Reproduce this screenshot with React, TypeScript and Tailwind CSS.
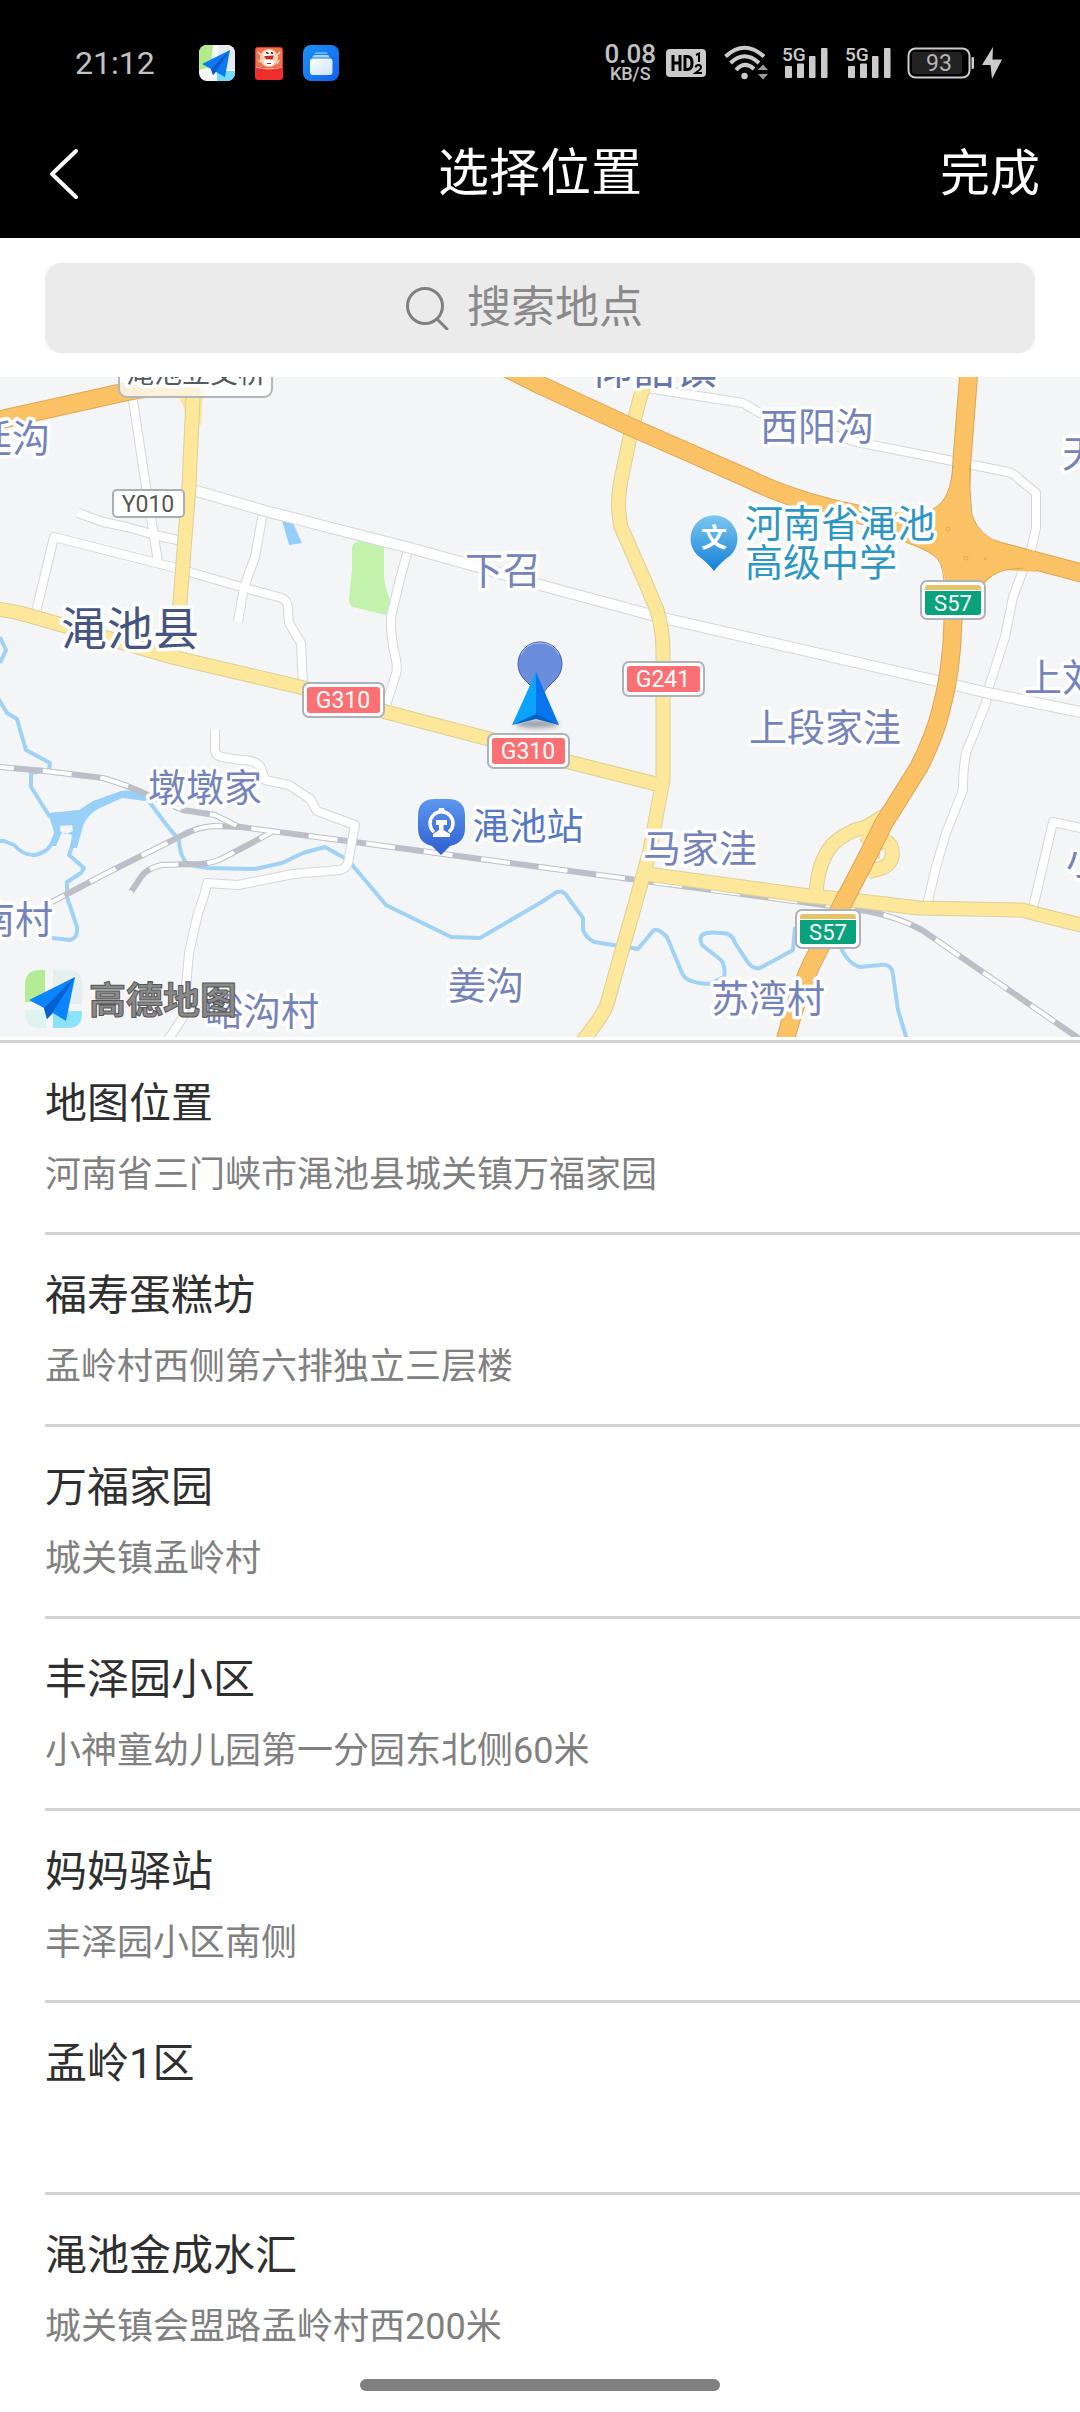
import React from "react";

const SANS = "font-['Roboto','Noto_Sans_CJK_SC',sans-serif]";

type Place = { name: string; address: string };

const places: Place[] = [
  { name: "地图位置", address: "河南省三门峡市渑池县城关镇万福家园" },
  { name: "福寿蛋糕坊", address: "孟岭村西侧第六排独立三层楼" },
  { name: "万福家园", address: "城关镇孟岭村" },
  { name: "丰泽园小区", address: "小神童幼儿园第一分园东北侧60米" },
  { name: "妈妈驿站", address: "丰泽园小区南侧" },
  { name: "孟岭1区", address: "" },
  { name: "渑池金成水汇", address: "城关镇会盟路孟岭村西200米" },
];

function MapAppIcon() {
  return (
    <svg viewBox="0 0 36 36" className="size-9">
      <defs>
        <clipPath id="app-tile">
          <rect width="36" height="36" rx="8" />
        </clipPath>
      </defs>
      <g clipPath="url(#app-tile)">
        <rect width="36" height="36" fill="#f4f6f8" />
        <path d="M0 0H14L12 22L0 25Z" fill="#b3ea8c" />
        <path d="M20 0H36V24H18Z" fill="#e6ebef" />
        <path d="M18 26H36V36H18Z" fill="#74dcfa" />
      </g>
      <path d="M31 5L3 19L12 24L14 30L17 27L26 32Z" fill="#0a7bf2" />
      <path d="M31 5L12 24L14 30L17 26Z" fill="#0b57c6" />
    </svg>
  );
}

function RedAppIcon() {
  return (
    <svg viewBox="0 0 28 33" className="h-[33px] w-7">
      <rect width="28" height="33" rx="3" fill="#ee2d2d" />
      <path d="M1 3Q1 1 3 1H25Q27 1 27 3V19Q14 23 1 19Z" fill="#f0764f" />
      <path d="M1 20Q14 24 27 20" stroke="#ffc9a8" strokeWidth="1" fill="none" />
      <circle cx="14" cy="11" r="9" fill="#fbd3b5" />
      <path d="M9 7Q10 3 14 3.500Q18 2.500 19 7L20 10H8Z" fill="#fff" />
      <path d="M9 13H19Q20 19 14 19Q8 19 9 13Z" fill="#fff" />
      <path d="M11 5.500L13.500 6.500M16 5.500L18 6.500" stroke="#3a2020" strokeWidth="1.500" />
      <path d="M9 9L19 8.500L17.500 12.500L11 12Z" fill="#c42a25" />
      <path d="M3 5L6 8M3 13L6 15M25 5L22 8M24 13L22 17" stroke="#ffe6b0" strokeWidth="1.500" />
      <path d="M12 16.500H16" stroke="#8a3030" strokeWidth="1" />
    </svg>
  );
}

function BlueAppIcon() {
  return (
    <svg viewBox="0 0 36 36" className="size-9">
      <defs>
        <linearGradient id="blue-app" x1="0" y1="0" x2="1" y2="1">
          <stop offset="0" stopColor="#1b93f5" />
          <stop offset="1" stopColor="#1460ec" />
        </linearGradient>
        <linearGradient id="blue-card" x1="0" y1="0" x2="1" y2="1">
          <stop offset="0" stopColor="#ffffff" />
          <stop offset="1" stopColor="#c9e2ff" />
        </linearGradient>
      </defs>
      <rect width="36" height="36" rx="8" fill="url(#blue-app)" />
      <path d="M13 7H23L25 9H11Z" fill="#5db4fb" />
      <path d="M11 10H25L27 12.500H9Z" fill="#a3d3fd" />
      <rect x="7" y="13.500" width="22.500" height="16.500" rx="3" fill="url(#blue-card)" />
    </svg>
  );
}

function HdIcon() {
  return (
    <svg viewBox="0 0 40 28" className="h-7 w-10" role="img" aria-label="HD">
      <rect width="40" height="28" rx="4" fill="#cbcbcb" />
      <path d="M7 6V22M14 6V22M7 14H14" stroke="#000" strokeWidth="3" fill="none" />
      <path d="M19 7.500H21Q26 7.500 26 14T21 20.500H19Z" stroke="#000" strokeWidth="3" fill="none" />
      <path d="M30 6L33 4.500V13" stroke="#000" strokeWidth="2" fill="none" />
      <path d="M29.500 18.500Q30 16 32.500 16T35 18.500Q35 20 29.500 24H36" stroke="#000" strokeWidth="2" fill="none" />
    </svg>
  );
}

function WifiIcon() {
  return (
    <svg viewBox="0 0 44 36" className="h-9 w-11">
      <g fill="none" stroke="#cbcbcb" strokeWidth="4">
        <path d="M1.500 11.500Q20.500 -6 40 11.500" />
        <path d="M6.500 18Q20.500 4.500 35 18" />
        <path d="M12 25Q20.500 15.500 30 24" />
      </g>
      <circle cx="20.500" cy="31" r="3.200" fill="#cbcbcb" />
      <path d="M34 25L39 19.500L44 25ZM34 29L39 34.500L44 29Z" fill="#9a9a9a" />
    </svg>
  );
}

function SignalIcon() {
  return (
    <svg viewBox="0 0 46 34" className="h-[34px] w-[46px]">
      <text x="0" y="15" fill="#cbcbcb" fontSize="19" fontWeight="500" fontFamily="Roboto, sans-serif">
        5G
      </text>
      <g fill="#cbcbcb">
        <rect x="3" y="20" width="7" height="12" rx="1" />
        <rect x="15" y="17.500" width="7" height="14.500" rx="1" />
        <rect x="27" y="10" width="6.500" height="22" rx="1" />
        <rect x="39" y="2" width="6.500" height="30" rx="1" />
      </g>
    </svg>
  );
}

function BatteryIcon() {
  return (
    <svg viewBox="0 0 96 32" className="h-8 w-24" role="img" aria-label="93%">
      <rect x="1.500" y="1.500" width="61" height="29" rx="7" fill="none" stroke="#cbcbcb" strokeWidth="2" />
      <rect x="5" y="5" width="50" height="22" rx="3" fill="#222" />
      <rect x="64.500" y="10" width="2.500" height="12" rx="1" fill="#cbcbcb" />
      <text x="32" y="24" textAnchor="middle" fill="#b5b5b5" fontSize="23" fontFamily="Roboto, sans-serif">
        93
      </text>
      <path d="M86 0L75 18H83.500L85 32L95 12.500H85.500Z" fill="#cbcbcb" />
    </svg>
  );
}

function StatusBar() {
  return (
    <div className="flex h-[106px] items-center justify-between pt-5 pr-[77px] pl-[75px] text-[#c2c2c2]">
      <div className="flex items-center">
        <span className="w-[124px] text-[32px] leading-10">21:12</span>
        <div className="flex items-center gap-5">
          <MapAppIcon />
          <RedAppIcon />
          <BlueAppIcon />
        </div>
      </div>
      <div className="flex items-center">
        <div className="mr-2.5 flex flex-col items-center font-medium">
          <span className="text-[26px] leading-[22px]">0.08</span>
          <span className="text-[18px] leading-[18px]">KB/S</span>
        </div>
        <div className="mr-[18px]">
          <HdIcon />
        </div>
        <div className="mr-3.5">
          <WifiIcon />
        </div>
        <div className="mr-4 flex gap-[17px]">
          <SignalIcon />
          <SignalIcon />
        </div>
        <BatteryIcon />
      </div>
    </div>
  );
}

const yellowRoads = [
  "M193 397L189 487L185 537L180 603L172 657",
  "M-5 609Q10 610 27 615L62 625L172 657L300 687L386 712L489 739L569 762L660 785",
  "M649 370L640 398L630 437L621 480Q616 505 621 527L643 577L657 610Q663 630 663 653V780L650 850L640 887L623 947L609 997Q607 1008 597 1022L582 1042",
  "M647 874L809 896L860 901L919 908L1022 910Q1040 915 1085 926",
  "M816 900Q816 865 832 845Q846 831 866 827L886 815",
  "M864 834Q874 842 872 858",
  "M876 846Q884 836 891 846Q896 862 882 868L868 872",
];

const whiteRoads = [
  "M133 400L146 487L153 530L158 562",
  "M78 513L103 522L127 527L155 535L182 541",
  "M36 612L54 537L176 568L241 587L282 598Q288 600 288 610L289 623L301 643L303 686",
  "M263 513L255 557L244 587L238 622",
  "M408 550L399 583L391 617Q390 635 396 660Q398 670 395 677L386 705",
  "M647 388L743 403L760 413L857 442L953 461L1008 472Q1015 474 1020 480L1036 493V528L1031 550L1022 573L1013 597L1005 637L988 690L986 703L970 743Q963 755 963 790L946 833L936 867L927 905",
  "M1032 912L1053 822L1085 829",
  "M215 730V751Q216 756 222 757L241 760Q257 760 261 768L265 780L289 785L310 799L317 811L355 825L348 863Q346 869 339 870L293 874L238 885L207 883Q206 892 198 913L189 953L186 987L183 1017L168 1040",
];

const mainWhite = "M193 490L269 512L410 548L482 568L540 585L659 617L946 683L988 693L1085 713";

const orangeRoads = [
  "M-10 422L125 392Q160 384 200 388",
  "M496 363L540 385L633 428L747 478Q780 495 830 508L920 528",
  "M969 370L962 460L960 497L963 583L953 620Q952 670 941 710Q935 735 919 767L884 823L864 863L843 903L812 963Q797 995 784 1045",
  "M985 548L1036 561L1085 574",
];

const rivers = [
  "M-2 698L7 713L17 719L21 733L26 750L50 763L49 770L31 773V787L50 817",
  "M0 637L6 650L0 663",
  "M-2 841H4L14 845Q24 856 35 855Q50 852 54 838",
  "M75 838L69 855L84 868L81 873L67 882V897L77 927Q78 938 70 940L52 938",
  "M145 796L165 823L179 840Q180 860 190 865L207 868L255 869L282 863L303 853L325 847L348 860L386 905L451 937L480 938L540 903L557 892Q563 890 566 895L583 918V930Q588 942 600 943L638 949L653 931Q657 927 667 937L682 973Q686 983 709 984L724 977Q726 967 721 960L702 945Q695 930 720 933Q732 932 735 943L747 961Q753 970 760 968L793 950L795 927",
  "M840 946Q848 964 860 967L880 965Q892 963 893 975L898 1010L907 1040",
];

const rails = [
  "M0 767L45 771L103 778Q127 785 148 795L183 810L215 815L239 827",
  "M52 902L103 875L183 835Q198 827 213 826L241 827L362 843L540 867L809 903L867 911Q898 917 922 930L1084 1042",
  "M272 832L246 846L219 860Q205 865 189 864L162 865Q147 868 141 877L131 892",
];

const villages = [
  { text: "廷沟", x: 50, y: 439, anchor: "end" },
  { text: "下召", x: 503, y: 571, anchor: "middle" },
  { text: "西阳沟", x: 817, y: 427, anchor: "middle" },
  { text: "天", x: 1062, y: 454, anchor: "start" },
  { text: "上刘", x: 1024, y: 678, anchor: "start" },
  { text: "上段家洼", x: 825, y: 728, anchor: "middle" },
  { text: "墩墩家", x: 205, y: 788, anchor: "middle" },
  { text: "马家洼", x: 700, y: 849, anchor: "middle" },
  { text: "小", x: 1066, y: 861, anchor: "start" },
  { text: "南村", x: 53, y: 920, anchor: "end" },
  { text: "姜沟", x: 486, y: 986, anchor: "middle" },
  { text: "苏湾村", x: 768, y: 999, anchor: "middle" },
  { text: "峪沟村", x: 262, y: 1012, anchor: "middle" },
] as const;

function RoadPair({ paths, edge, fill, width }: { paths: string[]; edge: string; fill: string; width: number }) {
  return (
    <g fill="none" strokeLinejoin="round">
      {paths.map((d) => (
        <path key={"edge" + d} d={d} stroke={edge} strokeWidth={width} />
      ))}
      {paths.map((d) => (
        <path key={d} d={d} stroke={fill} strokeWidth={width - 2} />
      ))}
    </g>
  );
}

function NationalBadge({ x, y, text }: { x: number; y: number; text: string }) {
  return (
    <g>
      <rect x={x} y={y} width="81" height="34" rx="6" fill="#fff" stroke="#adb3b8" strokeWidth="2" />
      <rect x={x + 4} y={y + 4} width="73" height="26" rx="3" fill="#fb7072" />
      <text x={x + 40} y={y + 25} textAnchor="middle" fontSize="23" fill="#fff">
        {text}
      </text>
    </g>
  );
}

function ProvinceBadge({ x, y }: { x: number; y: number }) {
  return (
    <g>
      <rect x={x} y={y} width="64" height="38" rx="6" fill="#fff" stroke="#adb3b8" strokeWidth="2" />
      <path d={`M${x + 4} ${y + 9}v-2q0 -3 3 -3h50q3 0 3 3v2z`} fill="#e3c46a" />
      <path d={`M${x + 4} ${y + 10}h56v21q0 3 -3 3h-50q-3 0 -3 -3z`} fill="#08a27c" />
      <text x={x + 32} y={y + 30} textAnchor="middle" fontSize="22" fill="#fff">
        S57
      </text>
    </g>
  );
}

function LocationMap() {
  return (
    <svg
      viewBox="0 377 1080 660"
      className="block h-auto w-full bg-[#f4f5f7]"
      role="img"
      aria-label="渑池县地图"
      fontFamily="Roboto, 'Noto Sans CJK SC', sans-serif"
    >
      <defs>
        <linearGradient id="school" x1="0" y1="0" x2="0" y2="1">
          <stop offset="0" stopColor="#7cc8ee" />
          <stop offset="1" stopColor="#157fd8" />
        </linearGradient>
        <linearGradient id="station" x1="0" y1="0" x2="0" y2="1">
          <stop offset="0" stopColor="#5b97ee" />
          <stop offset="1" stopColor="#2e5fd0" />
        </linearGradient>
        <filter id="soft" x="-50%" y="-50%" width="200%" height="200%">
          <feGaussianBlur stdDeviation="2.500" />
        </filter>
      </defs>

      <path d="M352 548Q353 541 360 541L384 546V575Q384 585 390 600L386 615L353 607Q349 605 349 600L352 570Z" fill="#c2f2ac" />
      <path d="M282 520L293 523L302 543L289 545Z" fill="#94cffb" />

      <g fill="none" stroke="#a0d2f6" strokeWidth="4" strokeLinejoin="round">
        {rivers.map((d) => (
          <path key={d} d={d} />
        ))}
      </g>
      <path
        fillRule="evenodd"
        d="M48 813L79 810L93 801L121 791Q135 789 147 795L145 801L122 798L98 809Q87 815 83 826L77 848H70L72 835L62 832L56 846H50L54 832Z M60 826L72 825L73 831L66 834L60 831Z"
        fill="#98d0f8"
      />

      <g fill="none">
        {rails.map((d) => (
          <path key={"base" + d} d={d} stroke="#bcbfc8" strokeWidth="6" />
        ))}
        {rails.map((d) => (
          <path key={d} d={d} stroke="#fff" strokeWidth="4" strokeDasharray="29 29" strokeDashoffset="15" />
        ))}
      </g>

      <RoadPair paths={whiteRoads} edge="#d5d6da" fill="#fff" width={10} />
      <RoadPair paths={[mainWhite]} edge="#d5d6da" fill="#fff" width={12} />
      <path d="M160 390Q186 390 186 425H201L203 390Z" fill="#fde79a" />
      <RoadPair paths={yellowRoads} edge="#dcd096" fill="#fde79a" width={15} />
      <RoadPair paths={orangeRoads} edge="#dba659" fill="#fac265" width={19} />
      <path
        d="M822 502Q900 518 933 509Q951 500 954 462H969Q969 490 972 515Q980 538 1003 543L1040 553L1036 572L1005 570Q990 574 980 590L945 582Q943 560 933 555Q925 549 905 542L860 521Z"
        fill="#fac265"
      />
      <g fill="none" stroke="#dba659" strokeWidth="1">
        <path d="M933 509Q951 500 953 465M970 465Q969 490 972 515Q980 538 1003 543L1026 549M1024 568L1005 570Q992 574 984 582M944 582Q943 560 933 555Q925 549 905 542" />
        <circle cx="948" cy="529" r="2" />
        <circle cx="966" cy="558" r="2" />
        <circle cx="985" cy="559" r="1" />
      </g>

      <rect x="119" y="350" width="153" height="47" rx="8" fill="#fff" fillOpacity="0.750" stroke="#b4b7ba" strokeWidth="2" />

      <g dominantBaseline="central" paintOrder="stroke" stroke="#fff" strokeWidth="7" strokeLinejoin="round">
        <text x="196" y="373" textAnchor="middle" fontSize="28" fill="#54585e">
          渑池立交桥
        </text>
        <text x="654" y="369" textAnchor="middle" fontSize="42" fill="#6676ad">
          仰韶镇
        </text>
        <text x="130" y="629" textAnchor="middle" fontSize="46" fill="#46557f">
          渑池县
        </text>
        {villages.map((v) => (
          <text key={v.text} x={v.x} y={v.y} textAnchor={v.anchor} fontSize="38" fill="#7484bb">
            {v.text}
          </text>
        ))}
        <text x="745" y="524" fontSize="38" fill="#2d96c4">
          河南省渑池
        </text>
        <text x="745" y="563" fontSize="38" fill="#2d96c4">
          高级中学
        </text>
        <text x="528" y="827" textAnchor="middle" fontSize="37" fill="#5478c8">
          渑池站
        </text>
      </g>

      <rect x="113" y="490" width="71" height="27" rx="4" fill="#fff" stroke="#a9b0b5" strokeWidth="2" />
      <text x="148" y="512" textAnchor="middle" fontSize="23" fill="#555">
        Y010
      </text>
      <NationalBadge x={303} y={683} text="G310" />
      <NationalBadge x={488} y={734} text="G310" />
      <NationalBadge x={623} y={662} text="G241" />
      <ProvinceBadge x={921} y={581} />
      <ProvinceBadge x={796} y={910} />

      <path d="M714 571Q707 562 697 555A23.500 23.500 0 1 1 731 555Q721 562 714 571Z" fill="url(#school)" />
      <text x="714" y="538" dominantBaseline="central" textAnchor="middle" fontSize="26" fontWeight="700" fill="#fff">
        文
      </text>

      <path
        d="M441 855L432 846Q418 843 418 828V816Q418 799 435 799H448Q465 799 465 816V828Q465 843 450 846Z"
        fill="url(#station)"
      />
      <path d="M434 832A11.500 11.500 0 1 1 449 832" fill="none" stroke="#fff" strokeWidth="3.500" />
      <path d="M438 812L439 808H444L445 812Z" fill="#fff" />
      <path d="M436 820H447V825H443.500V830L450 834V837H433V834L439 830V825H436Z" fill="#fff" />

      <path d="M540 697Q533 687 525 680A22 22 0 1 1 555 680Q547 687 540 697Z" fill="#6b8edc" stroke="#45609f" strokeWidth="1" />
      <path d="M521 655Q526 643 540 643Q554 643 559 655" fill="none" stroke="#a9c0ef" strokeWidth="1" />
      <ellipse cx="537" cy="724" rx="22" ry="4" fill="#5a6472" fillOpacity="0.600" filter="url(#soft)" />
      <path d="M536 672L512 725L536 717Z" fill="#0ca4fb" />
      <path d="M536 672L559 725L536 717Z" fill="#0a74ee" />
      <path d="M512 725L536 714L559 725L536 719Z" fill="#0562c4" />

      <path d="M45 970V1002H25V985Q25 970 40 970Z" fill="#b4ec96" />
      <path d="M53 970H68Q82 970 82 984V1004H53Z" fill="#e4efee" />
      <path d="M25 1010H47V1028H40Q25 1028 25 1013Z" fill="#def4f0" />
      <path d="M53 1011H82V1014Q82 1028 68 1028H53Z" fill="#8ce2fb" />
      <path d="M75 977L29 1000L44 1008L47 1019L53 1013L66 1021Z" fill="#0a84ff" />
      <path d="M75 977L44 1008L47 1019L53 1012Z" fill="#0660cf" />
      <text
        x="89"
        y="1001"
        dominantBaseline="central"
        fontSize="37"
        fontWeight="700"
        fill="#8a8a8a"
        stroke="#555"
        strokeWidth="1"
      >
        高德地图
      </text>
    </svg>
  );
}

function PlaceRow({ place, last }: { place: Place; last: boolean }) {
  return (
    <li className={last ? "h-[184px]" : "h-48 border-b-[3px] border-[#d2d2d2]"}>
      <button type="button" className="flex w-full flex-col items-start gap-3 pt-[30px] text-left">
        <span className="text-[42px] leading-[62px] text-[#2f2f2f]">{place.name}</span>
        <span className="text-[36px] leading-[56px] text-[#808080]">{place.address}</span>
      </button>
    </li>
  );
}

export default function App() {
  return (
    <div className={`flex min-h-screen w-full flex-col overflow-x-hidden bg-white ${SANS}`}>
      <header className="bg-black text-white">
        <StatusBar />
        <nav className="grid h-[132px] grid-cols-3 items-center px-10 pt-1 text-[50px] leading-[72px]">
          <button type="button" aria-label="返回" className="flex h-16 w-12 items-center justify-center">
            <svg viewBox="0 0 30 52" className="h-[52px] w-[30px]">
              <path d="M27 3L3 26L27 49" fill="none" stroke="#fff" strokeWidth="4" strokeLinecap="round" strokeLinejoin="round" />
            </svg>
          </button>
          <h1 className="text-center text-[51px]">选择位置</h1>
          <button type="button" className="justify-self-end">
            完成
          </button>
        </nav>
      </header>

      <div className="px-[45px] pt-[25px] pb-6">
        <label className="flex h-[90px] items-center justify-center gap-[18px] rounded-2xl bg-[#ebebeb]">
          <svg viewBox="0 0 44 44" className="size-11">
            <g fill="none" stroke="#808080" strokeWidth="3" strokeLinecap="round">
              <circle cx="20" cy="20" r="17.500" />
              <path d="M32 33L42 43" />
            </g>
          </svg>
          <input
            type="search"
            aria-label="搜索地点"
            placeholder="搜索地点"
            className="w-52 bg-transparent text-[44px] leading-[64px] text-[#333] outline-none placeholder:text-[#8a8a8a]"
          />
        </label>
      </div>

      <section className="border-b-[3px] border-[#d2d2d2] pb-[3px]">
        <LocationMap />
      </section>

      <ul className="pl-[45px]">
        {places.map((place, i) => (
          <PlaceRow key={place.name} place={place} last={i === places.length - 1} />
        ))}
      </ul>

      <div className="mx-auto mb-[21px] h-3 w-1/3 rounded-full bg-[#808080]" />
    </div>
  );
}
